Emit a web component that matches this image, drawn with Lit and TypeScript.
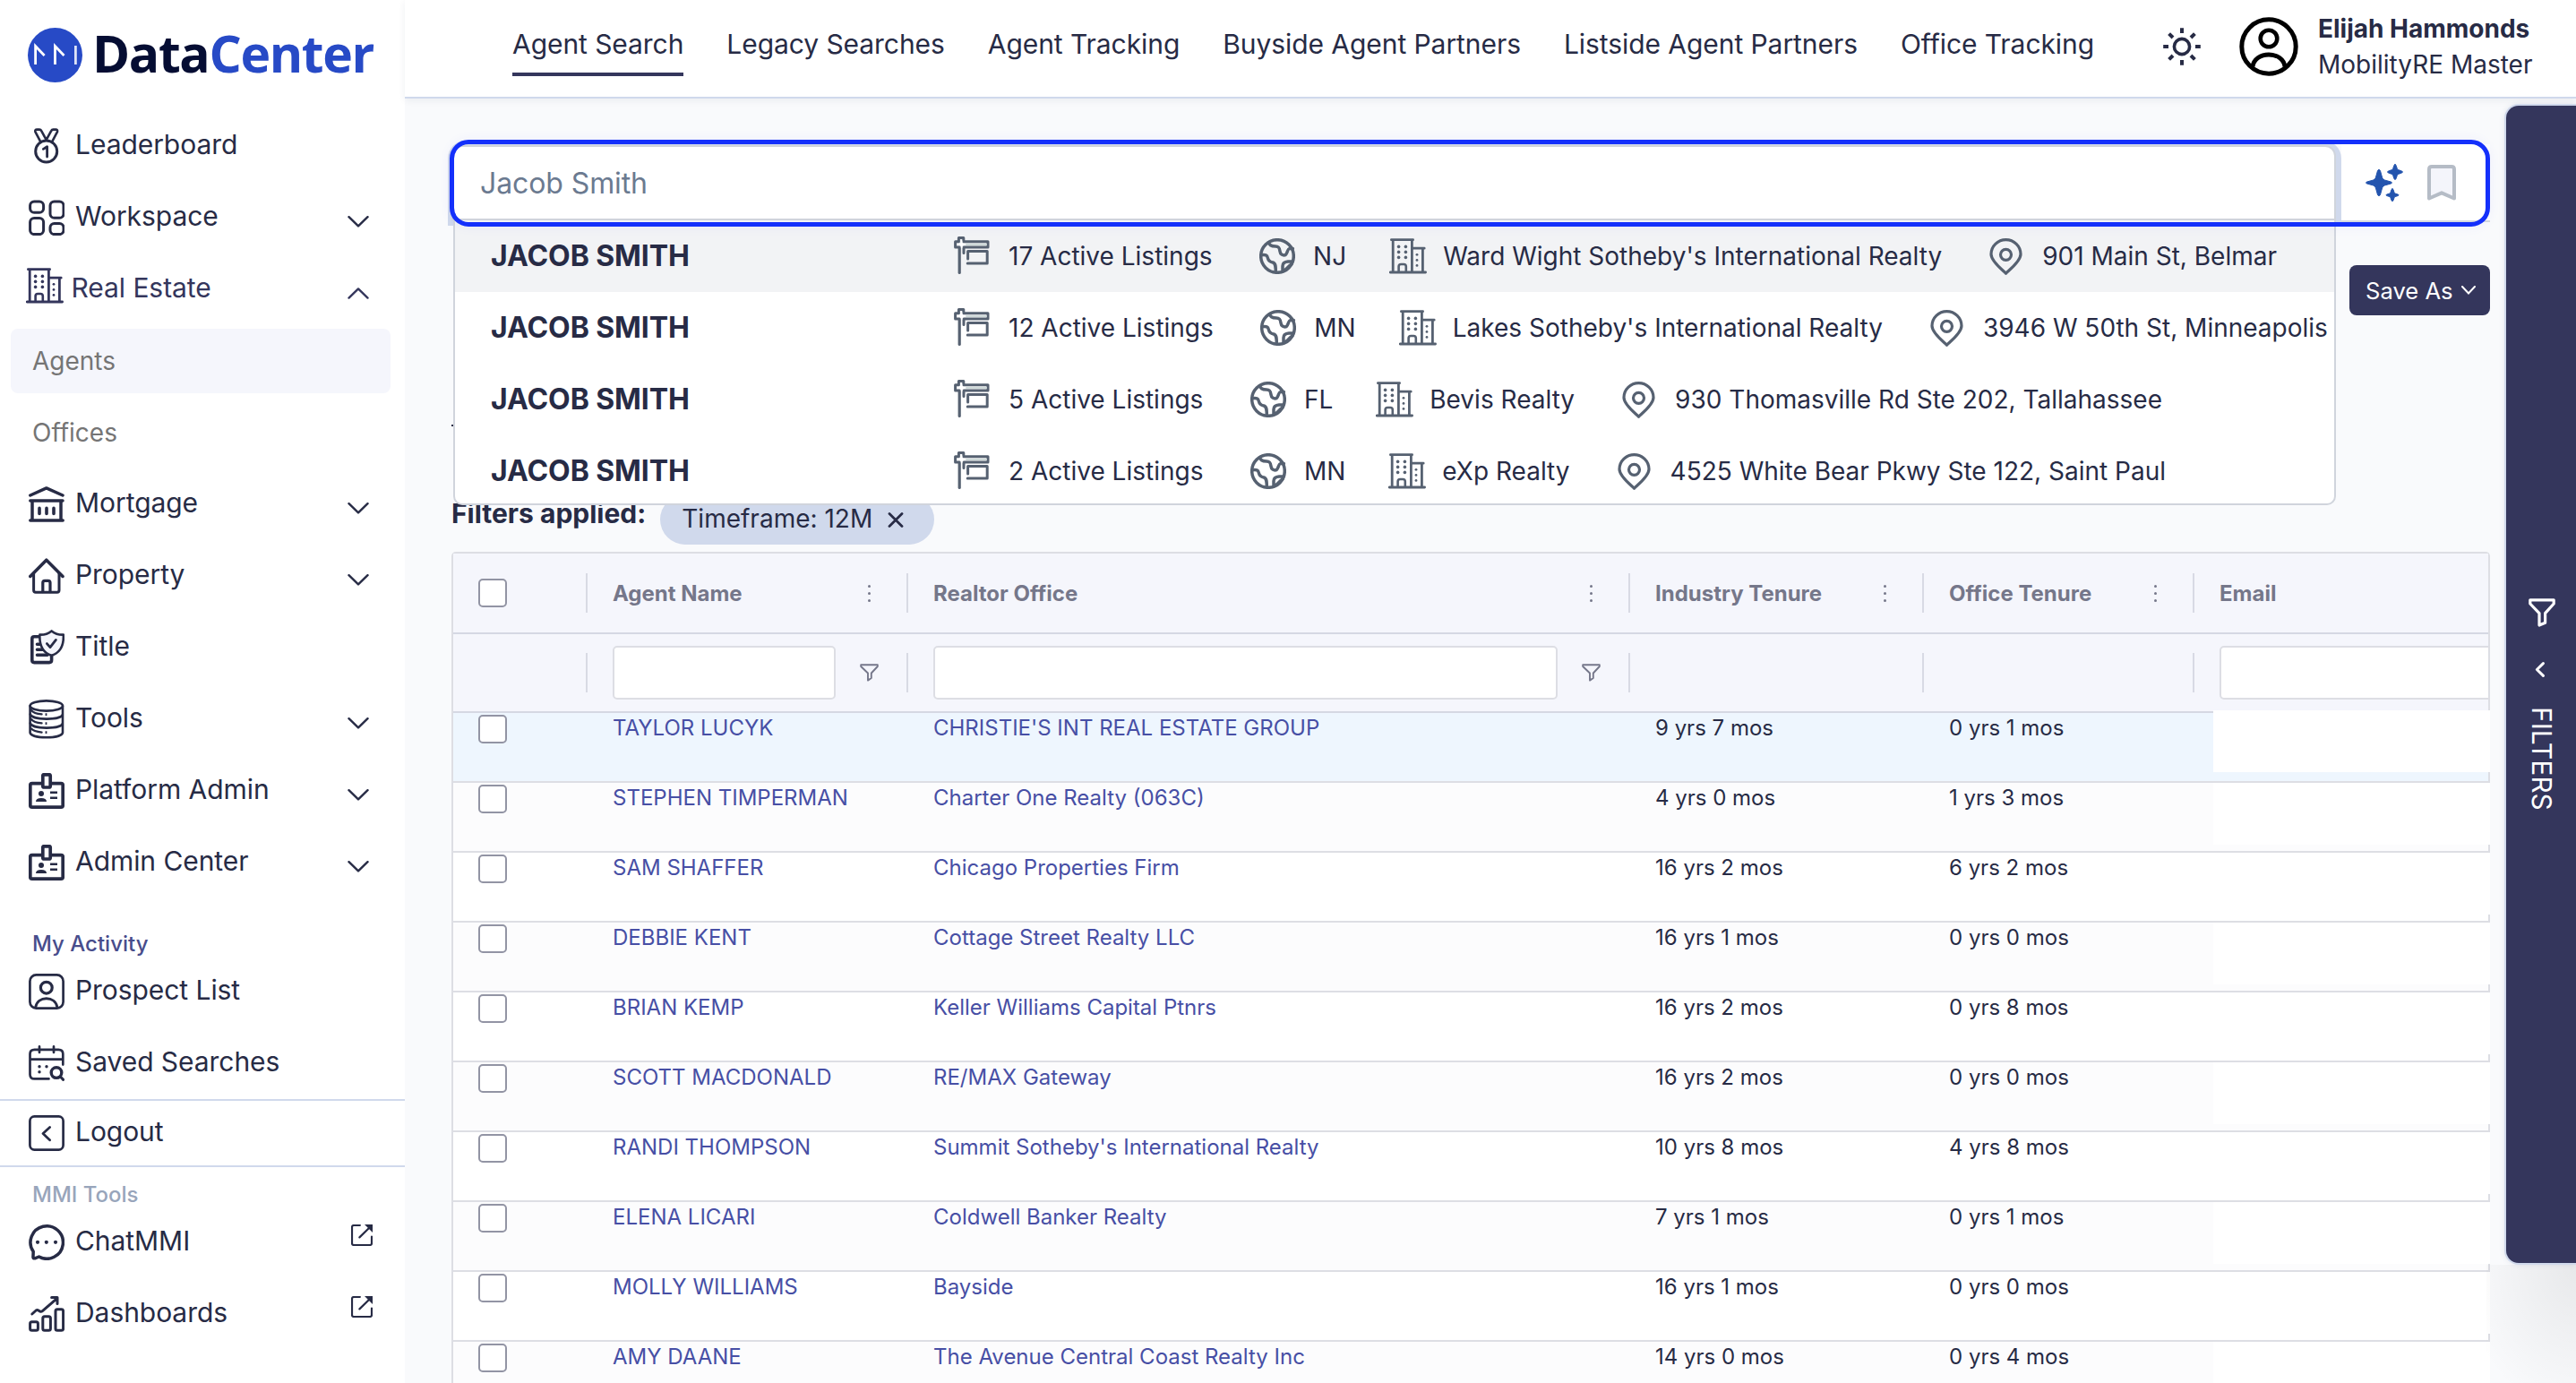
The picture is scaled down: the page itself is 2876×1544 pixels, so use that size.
import { LitElement, html, css, svg, nothing } from "lit";
import type { TemplateResult } from "lit";
import { customElement, property, state } from "lit/decorators.js";
import { classMap } from "lit/directives/class-map.js";

type Icon = { w: number; h: number; body: TemplateResult };

const ICONS: Record<string, Icon> = {
  medal: {
    w: 40,
    h: 40,
    body: svg`
      <circle cx="19.7" cy="26" r="12" />
      <path d="M16.4 23.4 20.6 20.8V32" stroke-width="2.8" />
      <path d="M13.2 15.2 7.4 4.2Q6.8 1.6 9.2 1.6H12Q13.5 1.6 14.1 2.8L19.7 13.2 25.3 2.8Q25.9 1.6 27.4 1.6H30.2Q32.6 1.6 32 4.2L26.2 15.2" stroke-width="2.6" />
    `,
  },
  grid: {
    w: 40,
    h: 40,
    body: svg`
      <rect x="1.6" y="1.9" width="15" height="12.4" rx="4.6" />
      <rect x="24" y="1.9" width="15" height="18.4" rx="4.6" />
      <rect x="1.6" y="20.4" width="15" height="18.2" rx="4.6" />
      <rect x="24" y="26.4" width="15" height="12.2" rx="4.6" />
    `,
  },
  building: {
    w: 42,
    h: 40,
    body: svg`
      <path d="M2.4 1.7H26.6M4.2 2V38M25.4 2V38M1.2 38H40.6M26 11.2H39.2M37.4 11.6V38" stroke-width="2.8" />
      <path d="M10.6 37V31.6Q10.6 29 13.2 29H16.2Q18.8 29 18.8 31.6V37" stroke-width="2.6" />
      <g fill="currentColor" stroke="none">
        <circle cx="10.6" cy="9.4" r="1.8" /><circle cx="18.4" cy="9.4" r="1.8" />
        <circle cx="10.6" cy="15.4" r="1.8" /><circle cx="18.4" cy="15.4" r="1.8" />
        <circle cx="10.6" cy="21.4" r="1.8" /><circle cx="18.4" cy="21.4" r="1.8" />
        <circle cx="31" cy="18.3" r="1.4" /><circle cx="31" cy="24.4" r="1.4" /><circle cx="31" cy="30.4" r="1.4" />
      </g>
    `,
  },
  bank: {
    w: 40,
    h: 40,
    body: svg`
      <path d="M1.8 10 19.8 1.9 38 10M1.8 16H38M1.8 38H38.2M4 16V38M36 16V38" stroke-width="3.5" />
      <path d="M12 24.4V30.4M20 24.4V30.4M28 24.4V30.4" stroke-width="3.6" />
    `,
  },
  house: {
    w: 40,
    h: 40,
    body: svg`
      <path d="M1.8 20.4 19.8 2.2 38 20.4" stroke-width="3.6" />
      <path d="M5.6 17V36Q5.6 38.2 7.8 38.2H31.8Q34 38.2 34 36V17" />
      <path d="M15.8 37.6V27.6Q15.8 25.4 18 25.4H21.8Q24 25.4 24 27.6V37.6" stroke-width="3.2" />
    `,
  },
  title: {
    w: 40,
    h: 40,
    body: svg`
      <path d="M12.5 7.8H6.2Q3.8 7.8 3.8 10.2V34Q3.8 36.6 6.2 36.6H23Q25.6 36.6 25.6 34V28" stroke-width="3.6" />
      <path d="M9.4 16.2H13M9.4 22.3H16M9.4 28.3H21" stroke-width="3.4" />
      <path d="M25.6 1.4C29.6 4.6 34 5.8 38.8 5.6 39.4 17 35.8 25.4 25.6 28.8 15.4 25.4 11.8 17 12.4 5.6 17.2 5.8 21.6 4.6 25.6 1.4Z" fill="#f4f5fb" stroke-width="2.6" />
      <path d="M20.4 15.6 24 19.6 30.4 11.4" stroke-width="2.8" />
    `,
  },
  database: {
    w: 40,
    h: 44,
    body: svg`
      <ellipse cx="19.8" cy="7" rx="18.2" ry="5.6" stroke-width="2.6" />
      <path d="M1.6 7V37C3 44 36.6 44 38 37V7" stroke-width="2.6" />
      <path d="M1.8 16.5C4 23.2 35.6 23.2 37.8 17M1.8 26.5C4 33.2 35.6 33.2 37.8 27" stroke-width="2.6" />
      <path d="M3 12C5 14.8 9 16 14.6 16.4M3 22C5 24.8 9 26 14.6 26.4M3 32.5C5 35 9 36 14.6 36.6" stroke-width="2.2" />
      <path d="M18.6 16.7h1.8M18.6 26.7h1.8M18.6 36.7h1.8" stroke-width="2.8" stroke-linecap="butt" />
    `,
  },
  badge: {
    w: 40,
    h: 40,
    body: svg`
      <rect x="1.8" y="11.7" width="36.4" height="26.4" rx="2" stroke-width="3.7" />
      <rect x="15.8" y="1.8" width="8.4" height="14.2" rx="1.5" fill="#fff" stroke-width="3.7" />
      <circle cx="14" cy="23" r="3" fill="currentColor" stroke="none" />
      <path d="M8 32Q8 28 14 28T20 32Z" fill="currentColor" stroke="none" />
      <path d="M24 21.7h8M24 27.7h8" stroke-width="2.6" stroke-linecap="butt" />
    `,
  },
  contact: {
    w: 40,
    h: 40,
    body: svg`
      <rect x="1.4" y="1.4" width="37.2" height="37.2" rx="7" stroke-width="2.7" />
      <circle cx="19.8" cy="15.7" r="6.4" stroke-width="3.2" />
      <path d="M7.8 37C9 31 14 27.7 19.8 27.7S30.6 31 31.8 37" />
    `,
  },
  calendar: {
    w: 40,
    h: 40,
    body: svg`
      <path d="M22.5 37.4H6.5Q1.5 37.4 1.5 32.4V9.6Q1.5 4.8 6.5 4.8H33.3Q38.3 4.8 38.3 9.6V21.6M1.5 15.7H38.3M12 1.4V8M28 1.4V8" stroke-width="2.7" />
      <circle cx="31" cy="30.6" r="5.8" stroke-width="3.4" />
      <path d="M35.4 35 38.6 38.4" />
      <g fill="currentColor" stroke="none">
        <circle cx="12" cy="23.7" r="1.7" /><circle cx="20" cy="23.7" r="1.7" /><circle cx="12" cy="29.7" r="1.7" />
      </g>
    `,
  },
  logout: {
    w: 40,
    h: 40,
    body: svg`
      <rect x="1.4" y="1.4" width="37.2" height="37.2" rx="5" stroke-width="2.7" />
      <path d="M23.6 13.5 16 20.6 23.6 27.8" stroke-width="2.7" />
    `,
  },
  chat: {
    w: 40,
    h: 40,
    body: svg`
      <path d="M5.2 30.3A18.2 18.2 0 1 1 11.5 36L7 37.8Q4.6 38.2 5 35.6Z" stroke-width="3.5" />
      <g fill="currentColor" stroke="none">
        <circle cx="10" cy="19.8" r="2.1" /><circle cx="19.8" cy="19.8" r="2.1" /><circle cx="30" cy="19.8" r="2.1" />
      </g>
    `,
  },
  chart: {
    w: 40,
    h: 40,
    body: svg`
      <rect x="1.6" y="28.7" width="8.8" height="9.6" rx="2" />
      <rect x="15.8" y="22.7" width="8.6" height="15.6" rx="2" />
      <rect x="30" y="14.8" width="8.6" height="23.5" rx="2" />
      <path d="M3.8 20 8.2 16Q9.6 15 11 16L12.5 17Q14 17.8 15.4 16.6L31.6 2.6M25.6 1.6H32V8.4" />
    `,
  },
  external: {
    w: 24,
    h: 24,
    body: svg`
      <path d="M9.8 1H3Q1 1 1 3V21Q1 23 3 23H21Q23 23 23 21V13.6M9.4 14.4 20 4" stroke-width="2.2" />
      <path d="M15 0H24V9Z" fill="currentColor" stroke="none" />
    `,
  },
  down: { w: 24, h: 13, body: svg`<path d="M1.5 1.2 12 11.4 22.5 1.2" stroke-width="2.4" />` },
  up: { w: 24, h: 13, body: svg`<path d="M1.5 11.6 12 1.4 22.5 11.6" stroke-width="2.4" />` },
  sun: {
    w: 42,
    h: 42,
    body: svg`
      <circle cx="21" cy="21" r="8.6" stroke-width="3.6" />
      <path d="M21 .2V6M21 36V41.8M.2 21H6M36 21H41.8M6.6 6.6 11 11M31 31 35.4 35.4M6.6 35.4 11 31M31 11 35.4 6.6" stroke-width="4" stroke-linecap="butt" />
    `,
  },
  user: {
    w: 66,
    h: 66,
    body: svg`
      <circle cx="33" cy="33" r="30.2" stroke-width="5" />
      <circle cx="33" cy="24" r="9.3" stroke-width="4.6" />
      <path d="M15 55.5C16 47 24 42 33 42S50 47 51 55.5" stroke-width="4.8" stroke-linecap="butt" />
    `,
  },
  sparkle: {
    w: 42,
    h: 42,
    body: svg`
      <g fill="currentColor" stroke-width="1">
        <path d="M15 6.5Q16.2 6.5 16.6 8L18.6 15.2Q19.3 17.2 21.3 18L28.3 20Q29.5 20.5 29.5 21T28.3 22L21.3 24Q19.3 24.8 18.6 26.8L16.6 34Q16.2 35.5 15 35.5T13.4 34L11.4 26.8Q10.7 24.8 8.7 24L1.7 22Q.5 21.5 .5 21T1.7 20L8.7 18Q10.7 17.2 11.4 15.2L13.4 8Q13.8 6.5 15 6.5Z" />
        <path d="M33 .5Q33.8 .5 34.2 2L35.4 5.4Q35.7 6.2 36.6 6.6L40.3 8Q41.5 8.4 41.5 9T40.3 10L36.6 11.4Q35.7 11.8 35.4 12.6L34.2 16Q33.8 17.5 33 17.5T31.8 16L30.6 12.6Q30.3 11.8 29.4 11.4L25.7 10Q24.5 9.6 24.5 9T25.7 8L29.4 6.6Q30.3 6.2 30.6 5.4L31.8 2Q32.2 .5 33 .5Z" />
        <path d="M30 27.8Q30.7 27.8 31.1 29L32.1 32Q32.4 32.7 33.1 33L36 34Q37 34.3 37 34.8T36 35.6L33.1 36.6Q32.4 36.9 32.1 37.6L31.1 40.4Q30.7 41.6 30 41.6T28.9 40.4L27.9 37.6Q27.6 36.9 26.9 36.6L24 35.6Q23 35.3 23 34.8T24 34L26.9 33Q27.6 32.7 27.9 32L28.9 29Q29.3 27.8 30 27.8Z" />
      </g>
    `,
  },
  bookmark: {
    w: 32,
    h: 40,
    body: svg`<path d="M5 2H27Q30 2 30 5V37.5L16 31.3 2 37.5V5Q2 2 5 2Z" fill="#f4f5fb" stroke-width="4" />`,
  },
  sign: {
    w: 40,
    h: 42,
    body: svg`
      <path d="M6.2 12V40.4" stroke-width="3.2" />
      <path d="M5.4 5.8V1.6H10.8V5.8H38V12H11V18.4M5.4 5.8H1.6V12H5.4" stroke-width="3" />
      <path d="M8.6 5V12.5M5 8.8H12" stroke="#fff" stroke-width="1.6" />
      <path d="M15.6 25V16.6H37.2V30H15.2" stroke-width="3" />
      <path d="M14 9H36" stroke="#cfdad9" stroke-width="2" />
    `,
  },
  globe: {
    w: 40,
    h: 40,
    body: svg`
      <circle cx="20" cy="20" r="18.3" stroke-width="3.5" />
      <path d="M10.5 4.5C11 8.5 14 9 18 9S22.6 11 23 14.5 26 19.2 28.5 18.8 31.3 12 33.5 11.6L37.4 11.6M2.2 18.7C7 18.2 8.7 18.7 9.4 22S12 26.4 15 27 18.3 31 18.3 37.6M37 25.9H32C28 26.2 26 28 26 31V37.2M26 36.5C30 36 31 32 36 29" stroke-width="3.5" />
    `,
  },
  pin: {
    w: 37,
    h: 41,
    body: svg`
      <path d="M18.5 39.2C16.5 36.6 2 26.5 2 17.8A16.5 16.2 0 0 1 35 17.8C35 26.5 20.5 36.6 18.5 39.2Z" stroke-width="3.2" />
      <circle cx="18.5" cy="18.3" r="6" stroke-width="3.2" />
    `,
  },
  close: { w: 18, h: 17, body: svg`<path d="M2 1.5 16 15.5M16 1.5 2 15.5" stroke-width="2.8" />` },
  filter: {
    w: 21,
    h: 20,
    body: svg`<path d="M1.2 1.2H19.8V3L12.8 10.5V16L9 18.6V10.5L1.2 3Z" stroke-width="1.9" />`,
  },
  funnel: {
    w: 30,
    h: 32,
    body: svg`<path d="M1.8 1.8H28.2V6L18.6 16.6V27.2L12 30V16.6L1.8 6Z" stroke-width="3.2" />`,
  },
  left: { w: 11, h: 17, body: svg`<path d="M9.4 1.6 2.4 8.5 9.4 15.4" />` },
};

@customElement("mmi-icon")
export class MmiIcon extends LitElement {
  static styles = css`
    :host {
      display: block;
      flex: none;
    }

    svg {
      display: block;
      fill: none;
      stroke: currentColor;
      stroke-width: 3;
      stroke-linecap: round;
      stroke-linejoin: round;
    }
  `;

  @property() name = "grid";

  render() {
    const icon = ICONS[this.name];
    return html`
      <svg width=${icon.w} height=${icon.h} viewBox="0 0 ${icon.w} ${icon.h}">
        ${icon.body}
      </svg>
    `;
  }
}

type NavItem = { label: string; icon: string; chevron?: boolean; link?: boolean };

const MENU: NavItem[] = [
  { label: "Mortgage", icon: "bank", chevron: true },
  { label: "Property", icon: "house", chevron: true },
  { label: "Title", icon: "title" },
  { label: "Tools", icon: "database", chevron: true },
  { label: "Platform Admin", icon: "badge", chevron: true },
  { label: "Admin Center", icon: "badge", chevron: true },
];

const TABS = [
  "Agent Search",
  "Legacy Searches",
  "Agent Tracking",
  "Buyside Agent Partners",
  "Listside Agent Partners",
  "Office Tracking",
];

const SUGGESTIONS = [
  {
    name: "JACOB SMITH",
    listings: 17,
    state: "NJ",
    office: "Ward Wight Sotheby's International Realty",
    address: "901 Main St, Belmar",
  },
  {
    name: "JACOB SMITH",
    listings: 12,
    state: "MN",
    office: "Lakes Sotheby's International Realty",
    address: "3946 W 50th St, Minneapolis",
  },
  {
    name: "JACOB SMITH",
    listings: 5,
    state: "FL",
    office: "Bevis Realty",
    address: "930 Thomasville Rd Ste 202, Tallahassee",
  },
  {
    name: "JACOB SMITH",
    listings: 2,
    state: "MN",
    office: "eXp Realty",
    address: "4525 White Bear Pkwy Ste 122, Saint Paul",
  },
];

const COLUMNS = [
  { title: "Agent Name", menu: true, input: true, filter: true },
  { title: "Realtor Office", menu: true, input: true, filter: true },
  { title: "Industry Tenure", menu: true },
  { title: "Office Tenure", menu: true },
  { title: "Email", input: true },
];

const AGENTS = [
  ["TAYLOR LUCYK", "CHRISTIE'S INT REAL ESTATE GROUP", "9 yrs 7 mos", "0 yrs 1 mos"],
  ["STEPHEN TIMPERMAN", "Charter One Realty (063C)", "4 yrs 0 mos", "1 yrs 3 mos"],
  ["SAM SHAFFER", "Chicago Properties Firm", "16 yrs 2 mos", "6 yrs 2 mos"],
  ["DEBBIE KENT", "Cottage Street Realty LLC", "16 yrs 1 mos", "0 yrs 0 mos"],
  ["BRIAN KEMP", "Keller Williams Capital Ptnrs", "16 yrs 2 mos", "0 yrs 8 mos"],
  ["SCOTT MACDONALD", "RE/MAX Gateway", "16 yrs 2 mos", "0 yrs 0 mos"],
  ["RANDI THOMPSON", "Summit Sotheby's International Realty", "10 yrs 8 mos", "4 yrs 8 mos"],
  ["ELENA LICARI", "Coldwell Banker Realty", "7 yrs 1 mos", "0 yrs 1 mos"],
  ["MOLLY WILLIAMS", "Bayside", "16 yrs 1 mos", "0 yrs 0 mos"],
  ["AMY DAANE", "The Avenue Central Coast Realty Inc", "14 yrs 0 mos", "0 yrs 4 mos"],
];

@customElement("app-root")
export class AppRoot extends LitElement {
  static styles = css`
    :host {
      display: flex;
      width: 2876px;
      height: 1544px;
      overflow: hidden;
      background: #f9fafc;
      color: #272b45;
      font-family: Inter, "Liberation Sans", sans-serif;
      font-size: 30px;
      white-space: nowrap;
    }

    * {
      box-sizing: border-box;
    }

    /* sidebar */
    aside {
      flex: none;
      width: 452px;
      background: #fff;
    }

    .logo {
      display: flex;
      align-items: center;
      gap: 11px;
      height: 121px;
      padding: 2px 0 0 31px;
    }

    .logo svg {
      display: block;
    }

    .brand {
      margin-bottom: 6px;
      font: 700 57px/76px "Open Sans", "Noto Sans", sans-serif;
      letter-spacing: -1.35px;
      color: #050d33;
    }

    .brand span {
      color: #274ac6;
    }

    .item {
      display: flex;
      align-items: center;
      gap: 12px;
      height: 80px;
      padding: 0 40px 0 32px;
      letter-spacing: -0.06px;
    }

    .item > mmi-icon {
      margin-top: 4px;
    }

    .item .label {
      flex: 1;
      line-height: 80px;
    }

    .item .chevron {
      margin-top: 12px;
    }

    .item .ext {
      margin: 0 -4px 12px 0;
    }

    .item.open {
      gap: 8.5px;
      padding-left: 29px;
      color: #34365c;
    }

    .item.open > mmi-icon:first-child {
      margin: -4px 0 0;
    }

    .sub {
      height: 72px;
      margin: 8px 16px 2px 12px;
      padding-left: 24px;
      border-radius: 8px;
      font-size: 28px;
      line-height: 72px;
      color: #757575;
    }

    .sub.active {
      margin-top: 6px;
      background: #f5f6fc;
    }

    .caption {
      padding: 41px 0 0 36px;
      margin-bottom: -1px;
      font-size: 24px;
      font-weight: 500;
      line-height: 24px;
      color: #484d8c;
    }

    .caption.muted {
      padding-top: 19px;
      color: #98a5bb;
    }

    .logout {
      height: 76px;
      margin-top: 2px;
      border: solid #d0d9ec;
      border-width: 2px 0;
    }

    .logout .item {
      height: 68px;
    }

    /* header */
    main {
      flex: 1;
      min-width: 0;
      position: relative;
    }

    header {
      display: flex;
      height: 110px;
      padding-left: 120px;
      background: #fff;
      border-bottom: 2px solid #d0d9ec;
      box-shadow: 0 2px 8px rgba(30, 40, 70, 0.07);
    }

    nav {
      display: flex;
      gap: 48px;
      width: 1843px;
      letter-spacing: -0.065px;
    }

    nav span {
      height: 85px;
      line-height: 98px;
    }

    nav .current {
      border-bottom: 4px solid #34365c;
    }

    header > mmi-icon {
      margin: 31px 0 0;
    }

    header .avatar {
      margin: 19px 22px 0 43px;
      color: #000;
    }

    .who {
      padding-top: 12px;
      font-size: 28px;
      line-height: 40px;
    }

    /* search */
    .content {
      width: 2276px;
      margin-left: 52px;
      padding-top: 46px;
    }

    .search {
      position: relative;
      display: flex;
      height: 97px;
      margin-left: -4px;
      padding-top: 1px;
    }

    .strip {
      width: 2114px;
      height: 95px;
      padding: 5px 6px 0 4px;
      border-radius: 20px 20px 0 0;
      background: #d0d9ec;
    }

    .field {
      height: 84px;
      padding: 1px 0 0 30px;
      background: #fff;
      border: 2px solid #d0d4dc;
      border-radius: 12px 12px 0 0;
      font-size: 32px;
      line-height: 80px;
      letter-spacing: -0.1px;
      color: #6b7a90;
    }

    .actions {
      display: flex;
      flex: 1;
      gap: 27px;
      align-items: center;
      height: 87px;
      margin-top: 4px;
      padding-left: 27px;
      background: #fff;
      border-bottom: 2px solid #d5d9df;
      color: #2354ae;
    }

    .actions mmi-icon + mmi-icon {
      color: #b5bcc6;
    }

    .ring {
      position: absolute;
      z-index: 3;
      inset: 0 0 0 2px;
      border: 5px solid #1430fb;
      border-radius: 21px;
      box-shadow: 0 0 14px rgba(20, 48, 251, 0.05);
    }

    .dropdown {
      position: absolute;
      z-index: 2;
      top: 90px;
      left: 6px;
      width: 2102px;
      height: 318px;
      overflow: hidden;
      background: #fff;
      border: 2px solid #d0d4dc;
      border-top: 0;
      border-radius: 0 0 10px 10px;
    }

    .hit {
      display: flex;
      align-items: center;
      height: 80px;
      padding-left: 40px;
      font-size: 28px;
    }

    .hit.hover {
      background: #f2f3f5;
    }

    .hit mmi-icon {
      margin: 0 18px 0 48px;
      color: #566171;
    }

    .hit mmi-icon[name="sign"] {
      margin: -2px 21px 0 0;
    }

    .hit mmi-icon[name="globe"] {
      margin: 0 20px 0 52.5px;
    }

    .hit mmi-icon[name="pin"] {
      margin: 1px 22px 0 53px;
    }

    .hit .name {
      width: 517px;
      margin-bottom: 2px;
      font-size: 32px;
      font-weight: 700;
      letter-spacing: -0.08px;
    }

    .peek {
      position: absolute;
      left: 52px;
      top: 474px;
      width: 4px;
      height: 2px;
      background: #272b45;
    }

    .toolbar {
      display: flex;
      justify-content: flex-end;
      margin-top: 43px;
    }

    .save {
      display: flex;
      align-items: center;
      gap: 9px;
      width: 157px;
      height: 56px;
      padding-left: 18px;
      border-radius: 8px;
      background: #34365c;
      color: #fff;
      font-size: 25.6px;
    }

    .save svg {
      display: block;
      fill: none;
      stroke: #fff;
      stroke-width: 2;
      stroke-linecap: round;
    }

    .filters {
      display: flex;
      gap: 16px;
      margin: 200px 0 8px;
      line-height: 56px;
    }

    .filters b {
      margin-top: -7px;
    }

    .chip {
      display: flex;
      align-items: center;
      gap: 17px;
      height: 56px;
      padding: 0 34px 0 24px;
      border-radius: 28px;
      background: #d0d9ec;
      font-size: 28px;
      line-height: 54px;
    }

    .chip span {
      height: 56px;
    }

    .chip mmi-icon {
      margin-top: 1px;
    }

    /* grid */
    .table {
      border: 2px solid #dddee4;
      border-bottom: 0;
      border-radius: 5px 5px 0 0;
      background: #fff;
      font-size: 24px;
    }

    .tr {
      display: grid;
      grid-template-columns: 150px 358px 806px 328px 302px 328px;
      height: 78px;
      border-bottom: 2px solid #dddee4;
      line-height: 34px;
    }

    .tr:nth-child(even) {
      background: #fcfcfd;
    }

    .tr.selected {
      background: #eef6fe;
    }

    .tr.head,
    .tr.search-row {
      height: 90px;
      background: #f5f6fc;
      border-bottom-color: #d5d8e3;
      line-height: 88px;
    }

    .tr.search-row {
      height: 88px;
    }

    .td {
      display: flex;
      min-width: 0;
      padding-left: 28px;
    }

    .head .td,
    .search-row .td {
      align-items: center;
      overflow: hidden;
    }

    .divided {
      background: linear-gradient(#d8dae4, #d8dae4) right center / 2px 44px
        no-repeat;
    }

    .th {
      flex: 1;
      padding-top: 1px;
      font-weight: 700;
      color: #75778a;
    }

    .dots {
      display: grid;
      gap: 5px;
      margin-right: 42.5px;
    }

    .dots i {
      width: 3px;
      height: 3px;
      border-radius: 50%;
      background: #75778a;
    }

    .box {
      width: 32px;
      height: 32px;
      border: 2px solid #9294a4;
      border-radius: 5px;
      background: #fff;
    }

    .body-box {
      margin-top: 2px;
    }

    .input {
      flex: 1;
      height: 60px;
      border: 2px solid #dddee4;
      border-radius: 5px;
      background: #fff;
    }

    .input.wide {
      flex: none;
      width: 400px;
    }

    .search-row mmi-icon {
      margin: 0 33px 0 27px;
      color: #75778a;
    }

    .link {
      color: #474fa5;
    }

    .mail {
      flex: none;
      position: relative;
      width: 309px;
      height: 69px;
      margin-left: -7px;
      background: #fff;
    }

    .selected .mail {
      margin-top: -3px;
    }

    /* filters drawer */
    .drawer {
      position: absolute;
      top: 116px;
      right: 0;
      display: flex;
      flex-direction: column;
      align-items: center;
      width: 80px;
      height: 1296px;
      padding: 550px 0 0 2px;
      background: #34365c;
      border: 2px solid #d0d9ec;
      border-right: 0;
      border-radius: 16px 0 0 16px;
      box-shadow: 0 0 6px rgba(40, 60, 110, 0.1);
      color: #fff;
    }

    .drawer mmi-icon + mmi-icon {
      margin: 39px 0 33px -6px;
    }

    .vertical {
      writing-mode: vertical-rl;
      line-height: 36px;
    }

    .glow {
      position: absolute;
      top: 1412px;
      right: 0;
      width: 100px;
      height: 132px;
      background: radial-gradient(
        ellipse at top right,
        rgba(0, 0, 0, 0.07),
        transparent 90%
      );
    }
  `;

  @state() private query = "Jacob Smith";
  @state() private tab = "Agent Search";

  private item({ label, icon, chevron, link }: NavItem) {
    return html`
      <div class="item">
        <mmi-icon name=${icon}></mmi-icon>
        <span class="label">${label}</span>
        ${chevron ? html`<mmi-icon class="chevron" name="down"></mmi-icon>` : nothing}
        ${link ? html`<mmi-icon class="ext" name="external"></mmi-icon>` : nothing}
      </div>
    `;
  }

  private sidebar() {
    return html`
      <aside>
        <div class="logo">
          <svg width="61" height="61" viewBox="0 0 61 61" fill="none" stroke="#fff">
            <circle cx="30.5" cy="30.5" r="30.5" fill="#274ac6" stroke="none" />
            <path d="M8.6 41V20.6L18.6 31M30.5 41V20.6L40.5 31" stroke-width="2.8" />
            <path d="M53.4 20V41" stroke-width="2.8" opacity=".85" />
          </svg>
          <div class="brand">Data<span>Center</span></div>
        </div>
        ${this.item({ label: "Leaderboard", icon: "medal" })}
        ${this.item({ label: "Workspace", icon: "grid", chevron: true })}
        <div class="item open">
          <mmi-icon name="building"></mmi-icon>
          <span class="label">Real Estate</span>
          <mmi-icon class="chevron" name="up"></mmi-icon>
        </div>
        <div class="sub active">Agents</div>
        <div class="sub">Offices</div>
        ${MENU.map((m) => this.item(m))}
        <div class="caption">My Activity</div>
        ${this.item({ label: "Prospect List", icon: "contact" })}
        ${this.item({ label: "Saved Searches", icon: "calendar" })}
        <div class="logout">${this.item({ label: "Logout", icon: "logout" })}</div>
        <div class="caption muted">MMI Tools</div>
        ${this.item({ label: "ChatMMI", icon: "chat", link: true })}
        ${this.item({ label: "Dashboards", icon: "chart", link: true })}
      </aside>
    `;
  }

  private searchBar() {
    return html`
      <div class="search">
        <div class="strip"><div class="field">${this.query}</div></div>
        <div class="actions">
          <mmi-icon name="sparkle"></mmi-icon>
          <mmi-icon name="bookmark"></mmi-icon>
        </div>
        <div class="dropdown">
          ${SUGGESTIONS.map(
            (s, i) => html`
              <div class=${classMap({ hit: true, hover: i === 0 })}>
                <span class="name">${s.name}</span>
                <mmi-icon name="sign"></mmi-icon>
                <span>${s.listings} Active Listings</span>
                <mmi-icon name="globe"></mmi-icon>
                <span>${s.state}</span>
                <mmi-icon name="building"></mmi-icon>
                <span>${s.office}</span>
                <mmi-icon name="pin"></mmi-icon>
                <span>${s.address}</span>
              </div>
            `
          )}
        </div>
        <div class="ring"></div>
      </div>
    `;
  }

  private table() {
    return html`
      <div class="table">
        <div class="tr head">
          <div class="td divided"><div class="box"></div></div>
          ${COLUMNS.map(
            (c) => html`
              <div class=${classMap({ td: true, divided: !!c.menu })}>
                <span class="th">${c.title}</span>
                ${c.menu ? html`<div class="dots"><i></i><i></i><i></i></div>` : nothing}
              </div>
            `
          )}
        </div>
        <div class="tr search-row">
          <div class="td divided"></div>
          ${COLUMNS.map(
            (c) => html`
              <div class=${classMap({ td: true, divided: !!c.menu })}>
                ${c.input
                  ? html`<div class=${classMap({ input: true, wide: !c.filter })}></div>`
                  : nothing}
                ${c.filter ? html`<mmi-icon name="filter"></mmi-icon>` : nothing}
              </div>
            `
          )}
        </div>
        ${AGENTS.map(
          ([name, office, industry, tenure], i) => html`
            <div class=${classMap({ tr: true, selected: i === 0 })}>
              <div class="td"><div class="box body-box"></div></div>
              <div class="td link">${name}</div>
              <div class="td link">${office}</div>
              <div class="td">${industry}</div>
              <div class="td">${tenure}</div>
              <div class="td"><div class="mail"></div></div>
            </div>
          `
        )}
      </div>
    `;
  }

  render() {
    return html`
      ${this.sidebar()}
      <main>
        <header>
          <nav>
            ${TABS.map(
              (t) => html`<span class=${classMap({ current: t === this.tab })}>${t}</span>`
            )}
          </nav>
          <mmi-icon name="sun"></mmi-icon>
          <mmi-icon class="avatar" name="user"></mmi-icon>
          <div class="who">
            <b>Elijah Hammonds</b>
            <div>MobilityRE Master</div>
          </div>
        </header>
        <div class="peek"></div>
        <div class="content">
          ${this.searchBar()}
          <div class="toolbar">
            <div class="save">
              Save As
              <svg width="16" height="10"><path d="M1 1 8 8.5 15 1" /></svg>
            </div>
          </div>
          <div class="filters">
            <b>Filters applied:</b>
            <div class="chip">
              <span>Timeframe: 12M</span>
              <mmi-icon name="close"></mmi-icon>
            </div>
          </div>
          ${this.table()}
        </div>
        <div class="glow"></div>
        <div class="drawer">
          <mmi-icon name="funnel"></mmi-icon>
          <mmi-icon name="left"></mmi-icon>
          <span class="vertical">FILTERS</span>
        </div>
      </main>
    `;
  }
}
